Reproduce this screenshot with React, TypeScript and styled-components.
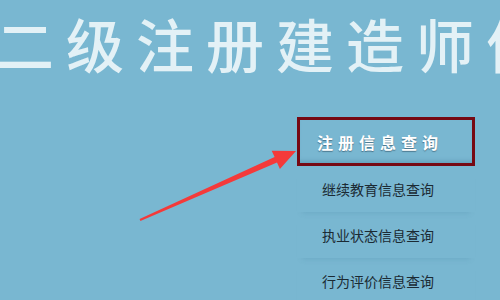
import React from "react";
import styled, { createGlobalStyle } from "styled-components";

const GlobalStyle = createGlobalStyle`
  html, body {
    margin: 0;
    padding: 0;
  }
  body {
    font-family: "Noto Sans CJK SC", "Noto Sans", sans-serif;
  }
`;

const Page = styled.div`
  position: relative;
  width: 500px;
  height: 300px;
  overflow: hidden;
  background: #79b7d1;
  display: flex;
  flex-direction: column;
`;

const Title = styled.div`
  margin: 10px 0 0 -4px;
  font-size: 58px;
  line-height: 66px;
  letter-spacing: 12px;
  white-space: nowrap;
  color: #e3f1f6;
  font-weight: 500;
`;

const Menu = styled.div`
  align-self: flex-end;
  width: 178px;
  margin: 41px 25px 0 0;
  display: flex;
  flex-direction: column;
`;

const Item = styled.div<{ $active?: boolean }>`
  box-sizing: border-box;
  height: ${(p) => (p.$active ? "49px" : "46px")};
  display: flex;
  align-items: center;
  padding-left: ${(p) => (p.$active ? "17px" : "25px")};
  font-size: ${(p) => (p.$active ? "16px" : "14px")};
  font-weight: ${(p) => (p.$active ? 700 : 400)};
  letter-spacing: ${(p) => (p.$active ? "5px" : "0")};
  color: ${(p) => (p.$active ? "#ffffff" : "#1b2a33")};
  border: ${(p) => (p.$active ? "3px solid #760913" : "none")};
  text-shadow: ${(p) => (p.$active ? "0 1px 1px rgba(40, 70, 90, 0.6)" : "none")};
  box-shadow: ${(p) =>
    p.$active
      ? "inset 0 -5px 4px -3px rgba(70, 130, 160, 0.45)"
      : "0 6px 5px -5px rgba(80, 140, 170, 0.3)"};
`;

const Arrow = styled.svg`
  position: absolute;
  left: 0;
  top: 0;
  pointer-events: none;
`;

const items = ["继续教育信息查询", "执业状态信息查询", "行为评价信息查询"];

const App: React.FC = (): JSX.Element => {
  return (
    <Page>
      <GlobalStyle />
      <Title>二级注册建造师信息</Title>
      <Menu>
        <Item $active>注册信息查询</Item>
        {items.map((t) => (
          <Item key={t}>{t}</Item>
        ))}
      </Menu>
      <Arrow width="500" height="300" viewBox="0 0 500 300">
        <polygon
          points="140.4,220.9 277,162.6 279.9,169.1 296,151 271.7,150.7 274.6,157.1 139.6,219.1"
          fill="#f43a3a"
        />
      </Arrow>
    </Page>
  );
};

export default App;
